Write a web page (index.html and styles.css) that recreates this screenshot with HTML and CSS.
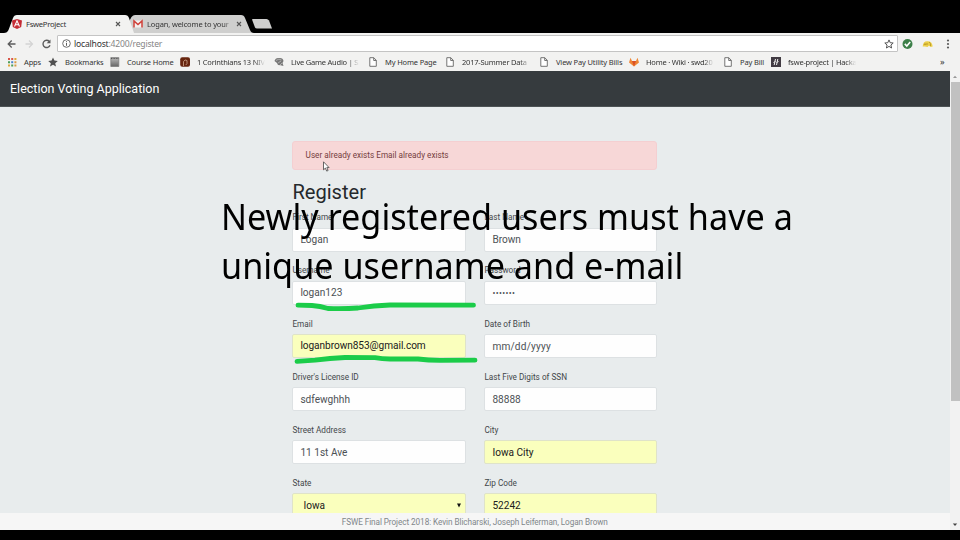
FILE: index.html
```html
<!DOCTYPE html>
<html lang="en">
<head>
<meta charset="utf-8">
<title>FsweProject</title>
<link rel="stylesheet" href="styles.css">
</head>
<body>
<div class="screen">
  <header class="tabs">
    <div class="tab tab-active">
      <svg class="tab-shape" viewBox="0 0 131 18"><path d="M0 18 C4 18 4.500 15 6 11 L9 3 Q10 0 13 0 H121 Q124 0 125 3 L130 18Z" fill="#f2f2f1"/></svg>
      <svg class="favicon" viewBox="0 0 10 10"><path d="M5 0 10 1.500 9.200 8 5 10 .8 8 0 1.500Z" fill="#c52c35"/><path d="M2.500 7.500 5 1.900 7.500 7.500M3.500 5.700h3" fill="none" stroke="#fff" stroke-width="1.100"/></svg>
      <span class="tab-title">FsweProject</span>
      <svg class="close" viewBox="0 0 6 6"><path d="M1 1 5 5M5 1 1 5" stroke="#555" stroke-width="1.100"/></svg>
    </div>
    <div class="tab tab-back">
      <svg class="tab-shape" viewBox="0 0 125 18"><path d="M4 18 0 8 Q2 0 6 0 H112 Q115 0 116 3 L121 15 Q122 18 125 18Z" fill="#cfcfce"/></svg>
      <svg class="favicon" viewBox="0 0 10 10"><path d="M.8 1.500h8.400v7H.8z" fill="#f4f1f0"/><path d="M1 8.600V2l4 3.600L9 2v6.600" fill="none" stroke="#cf4039" stroke-width="1.500"/></svg>
      <span class="tab-title">Logan, welcome to your n</span>
      <svg class="close" viewBox="0 0 6 6"><path d="M1 1 5 5M5 1 1 5" stroke="#555" stroke-width="1.100"/></svg>
    </div>
    <svg class="new-tab" viewBox="0 0 21 10"><path d="M0 .5Q0 0 1 0H14.500Q16 0 17 1.500L20 9.500H5Q3.500 9.500 3 8.500Z" fill="#cfcfce"/></svg>
  </header>

  <div class="toolbar">
    <svg class="nav-icons" viewBox="0 0 57 18" fill="none">
      <path d="M15.500 9H8.300M11.700 5.500 8.200 9l3.500 3.500" stroke="#5c5c5c" stroke-width="1.300"/>
      <path d="M25.500 9h7M29 5.500 32.500 9 29 12.500" stroke="#d4d4d4" stroke-width="1.300"/>
      <path d="M49.300 6.500A3.600 3.600 0 1 0 50 10.200" stroke="#5c5c5c" stroke-width="1.400"/><path d="M50.500 4.500v3.800h-3.800z" fill="#5c5c5c"/>
    </svg>
    <div class="address">
      <svg class="info" viewBox="0 0 9 9"><circle cx="4.500" cy="4.500" r="3.800" fill="none" stroke="#5e5e5e" stroke-width=".9"/><path d="M4.500 4v2.800M4.500 2.200v1" stroke="#5e5e5e"/></svg>
      <span class="url">localhost<span class="url-path">:4200/register</span></span>
      <svg class="star" viewBox="0 0 10 10"><path d="M5 .9 6.200 3.700 9.200 4 6.900 6 7.600 9 5 7.400 2.400 9 3.100 6 .8 4 3.800 3.700Z" fill="none" stroke="#555" stroke-width="1"/></svg>
    </div>
    <svg class="extensions" viewBox="0 0 60 18">
      <circle cx="9.500" cy="9" r="5" fill="#3d8049"/><path d="M6.800 8.900 8.800 11 12.200 7" fill="none" stroke="#fff" stroke-width="1.600"/>
      <path d="M24.700 11.500Q25 6 29.500 6.200 34 6 34.700 11.500L32.500 12 31 10.500 29.500 12 27 11.500Z" fill="#ebcf49"/><path d="M26 10q1-3 2 0m1-2v2m2-3q2 1 1.500 4" fill="none" stroke="#b28f22" stroke-width=".8"/>
      <g fill="#5a5a5a"><circle cx="50" cy="5.500" r="1.100"/><circle cx="50" cy="9" r="1.100"/><circle cx="50" cy="12.500" r="1.100"/></g>
    </svg>
  </div>

  <nav class="bookmarks">
    <div class="bookmark"><svg viewBox="0 0 10 10"><path d="M1 1h2v2H1zM4.200 1h2v2h-2z" fill="#d9574a"/><path d="M7.400 1h2v2h-2zM1 7.400h2v2H1z" fill="#e0a83a"/><path d="M1 4.200h2v2H1zM4.200 7.400h2v2h-2z" fill="#4c9d59"/><path d="M4.200 4.200h2v2h-2z" fill="#4a82d0"/><path d="M7.400 4.200h2v2h-2zM7.400 7.400h2v2h-2z" fill="#d99b45"/></svg><span>Apps</span></div>
    <div class="bookmark"><svg viewBox="0 0 10 10"><path d="M5 .5 6.400 3.600 9.800 4 7.200 6.200 8 9.500 5 7.700 2 9.500 2.800 6.200 .2 4 3.600 3.600Z" fill="#505050"/></svg><span>Bookmarks</span></div>
    <div class="bookmark"><svg viewBox="0 0 10 10"><defs><linearGradient id="pad" x2="0" y2="1"><stop stop-color="#bbb"/><stop offset="1" stop-color="#666"/></linearGradient></defs><path d="M.8.5h8v9h-8z" fill="url(#pad)" stroke="#777" stroke-width=".7"/><path d="M1 1.500h7.600" stroke="#555" stroke-dasharray="1 .6"/></svg><span>Course Home</span></div>
    <div class="bookmark"><svg viewBox="0 0 10 10"><rect x=".2" y=".2" width="9.800" height="9.600" rx="2" fill="#67250f"/><path d="M3.500 9V4.500Q5 2 7 3.500v3L5.800 8" fill="none" stroke="#c59a80" stroke-width=".9"/></svg><span class="fade">1 Corinthians 13 NIV</span></div>
    <div class="bookmark"><svg viewBox="0 0 10 10"><path d="M.5 4Q1.500.5 5 1 9 .5 9.500 4L8.500 6 9.500 9 6.500 8.200 4 8 3 6Z" fill="#777"/><path d="M2 3.500Q5 1 7.500 3M4 6l3-2M6 8l2-2" fill="none" stroke="#c4c4c4" stroke-width=".7"/></svg><span class="fade">Live Game Audio | Sa</span></div>
    <div class="bookmark"><svg viewBox="0 0 10 10"><path d="M1.800.7h4L8.300 3.300v6H1.800zM5.700.8v2.700h2.600" fill="#fff" stroke="#666" stroke-width=".9"/></svg><span>My Home Page</span></div>
    <div class="bookmark"><svg viewBox="0 0 10 10"><path d="M1.800.7h4L8.300 3.300v6H1.800zM5.700.8v2.700h2.600" fill="#fff" stroke="#666" stroke-width=".9"/></svg><span class="fade">2017-Summer Data</span></div>
    <div class="bookmark"><svg viewBox="0 0 10 10"><path d="M1.800.7h4L8.300 3.300v6H1.800zM5.700.8v2.700h2.600" fill="#fff" stroke="#666" stroke-width=".9"/></svg><span>View Pay Utility Bills</span></div>
    <div class="bookmark"><svg viewBox="0 0 10 10"><path d="M0 5.500 1.500.8 3 4h4L8.500.8 10 5.500 5 9.500Z" fill="#ef8534"/><path d="M3 4h4L5 9.500Z" fill="#d95028"/></svg><span class="fade">Home · Wiki · swd20</span></div>
    <div class="bookmark"><svg viewBox="0 0 10 10"><path d="M1.800.7h4L8.300 3.300v6H1.800zM5.700.8v2.700h2.600" fill="#fff" stroke="#666" stroke-width=".9"/></svg><span>Pay Bill</span></div>
    <div class="bookmark"><svg viewBox="0 0 10 10"><path d="M0 0h10v10H0z" fill="#413b43"/><path d="M3.200 8 4.500 2M5.500 8 6.800 2M2.500 5.500l2-1M5.500 5.500l2-1" stroke="#eee" stroke-width="1"/></svg><span class="fade">fswe-project | Hacka</span></div>
    <div class="more">»</div>
  </nav>

  <div class="viewport">
    <div class="page">
      <div class="navbar">Election Voting Application</div>
      <main class="content">
        <div class="alert">User already exists Email already exists</div>
        <h1>Register</h1>
        <form class="form">
          <div class="field"><label>First Name</label><div class="input">Logan</div></div>
          <div class="field"><label>Last Name</label><div class="input">Brown</div></div>
          <div class="field"><label>Username</label><div class="input">logan123</div></div>
          <div class="field"><label>Password</label><div class="input dots">•••••••</div></div>
          <div class="field"><label>Email</label><div class="input filled email">loganbrown853@gmail.com</div></div>
          <div class="field"><label>Date of Birth</label><div class="input date">mm/dd/yyyy</div></div>
          <div class="field"><label>Driver's License ID</label><div class="input">sdfewghhh</div></div>
          <div class="field"><label>Last Five Digits of SSN</label><div class="input">88888</div></div>
          <div class="field"><label>Street Address</label><div class="input">11 1st Ave</div></div>
          <div class="field"><label>City</label><div class="input filled">Iowa City</div></div>
          <div class="field"><label>State</label><div class="input filled select">Iowa<svg class="caret" viewBox="0 0 4 5"><path d="M0 .5h4L2 4.500Z" fill="#111"/></svg></div></div>
          <div class="field"><label>Zip Code</label><div class="input filled">52242</div></div>
        </form>
      </main>
      <footer class="footer">FSWE Final Project 2018: Kevin Blicharski, Joseph Leiferman, Logan Brown</footer>
    </div>
    <div class="scrollbar">
      <svg class="arrow" viewBox="0 0 10 10"><path d="M3 6.500 5 4.300 7 6.500Z" fill="#999"/></svg>
      <div class="thumb"></div>
      <svg class="arrow arrow-down" viewBox="0 0 10 10"><path d="M2.800 4h4.400L5 6.500Z" fill="#444"/></svg>
    </div>
  </div>

  <svg class="marks" viewBox="0 0 960 540">
    <g fill="none" stroke="#1bcc49" stroke-width="4.800" stroke-linecap="round" stroke-linejoin="round">
      <path d="M298 305.200 L312 305.500 Q320 306 328 308.500 Q345 309 358 308 Q374 305.500 390 305 L473.500 305.200"/>
      <path d="M297 361.300 L315 360.200 Q330 358 345 357.500 L375 357.700 Q382 359 390 359 L418 359 Q428 360.300 440 360.300 L475 360.200"/>
    </g>
    <path d="M323.500 161.800v8l1.900-1.700 1.300 3 1.400-.6-1.300-2.900h2.300Z" fill="#fff" stroke="#444" stroke-width=".8"/>
  </svg>
  <div class="caption"><div class="line">Newly registered users must have a</div><div class="line">unique username and e-mail</div></div>
</div>
</body>
</html>
```
FILE: styles.css
```css
* { box-sizing: border-box; }
body { margin: 0; background: #000; }
svg { display: block; flex: none; }

.screen {
  position: relative;
  width: 960px;
  height: 540px;
  padding-top: 15px;
  overflow: hidden;
  background: #000;
  font-family: "Noto Sans", "Open Sans", sans-serif;
  font-size: 7.5px;
  color: #333;
  white-space: nowrap;
}

.tabs { display: flex; height: 18px; padding-left: 4px; }
.tab { position: relative; display: flex; align-items: center; height: 18px; }
.tab-active { width: 125px; padding-left: 8px; z-index: 1; }
.tab-back { width: 122px; padding-left: 4px; z-index: 0; }
.tab-shape { position: absolute; left: 0; top: 0; height: 18px; z-index: -1; }
.tab-active .tab-shape { width: 131px; }
.tab-back .tab-shape { width: 125px; }
.favicon { width: 10px; height: 10px; }
.tab-title { margin-left: 4px; width: 84px; overflow: hidden; letter-spacing: -0.13px; }
.tab-active .tab-title { width: 88px; letter-spacing: -0.3px; font-size: 7.7px; }
.tab-back .tab-title { -webkit-mask-image: linear-gradient(90deg, #000 92%, transparent); }
.close { width: 6px; height: 6px; margin-left: 1px; }
.tab-back .close { margin-left: 5px; }
.new-tab { width: 21px; height: 10px; margin: 4px 0 0 1px; }

.toolbar { display: flex; align-items: center; height: 21px; background: #f2f2f1; }
.nav-icons { width: 57px; height: 18px; }
.address {
  display: flex;
  align-items: center;
  width: 841px;
  height: 17px;
  padding: 0 3px 0 4px;
  border: 1px solid #c4c4c4;
  border-radius: 1px;
  background: #fff;
}
.info { width: 9px; height: 9px; }
.url { flex: 1; margin-left: 3px; font-size: 8.6px; letter-spacing: -0.2px; color: #333; }
.url-path { color: #858585; }
.star { width: 10px; height: 10px; }
.extensions { width: 60px; height: 18px; }

.bookmarks {
  display: grid;
  grid-template-columns: 41px 62px 70px 94px 94px 77px 94px 90px 94px 48px 169px 10px;
  align-items: center;
  height: 17px;
  padding: 0 0 1px 7px;
  background: #f2f2f1;
}
.bookmark { display: flex; align-items: center; gap: 7px; }
.bookmark svg { width: 10px; height: 10px; }
.bookmark span { flex: none; letter-spacing: -0.15px; }
.bookmark .fade { width: 68px; overflow: hidden; letter-spacing: -0.22px; -webkit-mask-image: linear-gradient(90deg, #000 85%, transparent); }
.more { font-size: 9px; line-height: 10px; }

.viewport { display: flex; height: 459px; }
.page { display: flex; flex-direction: column; width: 949.5px; background: #e8eced; font-family: Roboto, sans-serif; }
.navbar {
  flex: none;
  height: 36px;
  padding-left: 10px;
  line-height: 36px;
  background: #363b3e;
  border-bottom: 1px solid #4d5355;
  color: #fff;
  font-size: 12.5px;
}
.content { flex: 1; min-height: 0; width: 365px; margin-left: 292.4px; padding-top: 34.4px; overflow: hidden; }
.alert {
  height: 29px;
  padding-left: 12.2px;
  border: 1px solid #f4cfd1;
  border-radius: 3px;
  background: #f7d7d7;
  color: #753d40;
  font-size: 8.2px;
  line-height: 27px;
}
h1 { margin: 9px 0 0; height: 27px; line-height: 26px; font-size: 20.1px; font-weight: 400; color: #25292c; }
.form { display: grid; grid-template-columns: 174px 173px; column-gap: 18px; grid-auto-rows: 53.1px; padding-top: 5px; }
.field label { display: block; height: 16.5px; line-height: 12px; font-size: 8.2px; color: #43474a; }
.input {
  display: flex;
  align-items: center;
  height: 24px;
  padding: 0 7px;
  border: 1px solid #dde1e3;
  border-radius: 2px;
  background: #fefefe;
  font-size: 10.1px;
  color: #4c5155;
}
.filled { background: #faffbd; border-color: #dfe3c9; color: #202020; }
.email { padding-bottom: 1.5px; letter-spacing: -0.05px; }
.dots { font-size: 8.6px; letter-spacing: .35px; }
.date { letter-spacing: .2px; }
.select { justify-content: space-between; padding: 0 4px 0 10px; }
.caret { width: 4px; height: 5px; }
.footer { flex: none; height: 17px; background: #f6f6f6; color: #81868a; font-size: 8.2px; letter-spacing: -0.07px; line-height: 18px; text-align: center; }

.scrollbar { display: flex; flex-direction: column; width: 10.5px; background: #f2f2f2; }
.arrow { width: 10px; height: 11px; }
.thumb { width: 9px; height: 319px; margin-left: 1px; background: #c1c1c1; }
.arrow-down { margin-top: auto; }

.marks { position: absolute; left: 0; top: 0; width: 960px; height: 540px; }
.caption { position: absolute; left: 221px; top: 192px; color: #000; font-size: 36.5px; line-height: 49px; }
.line { width: max-content; transform: scaleX(.937); transform-origin: 0 50%; }
```
